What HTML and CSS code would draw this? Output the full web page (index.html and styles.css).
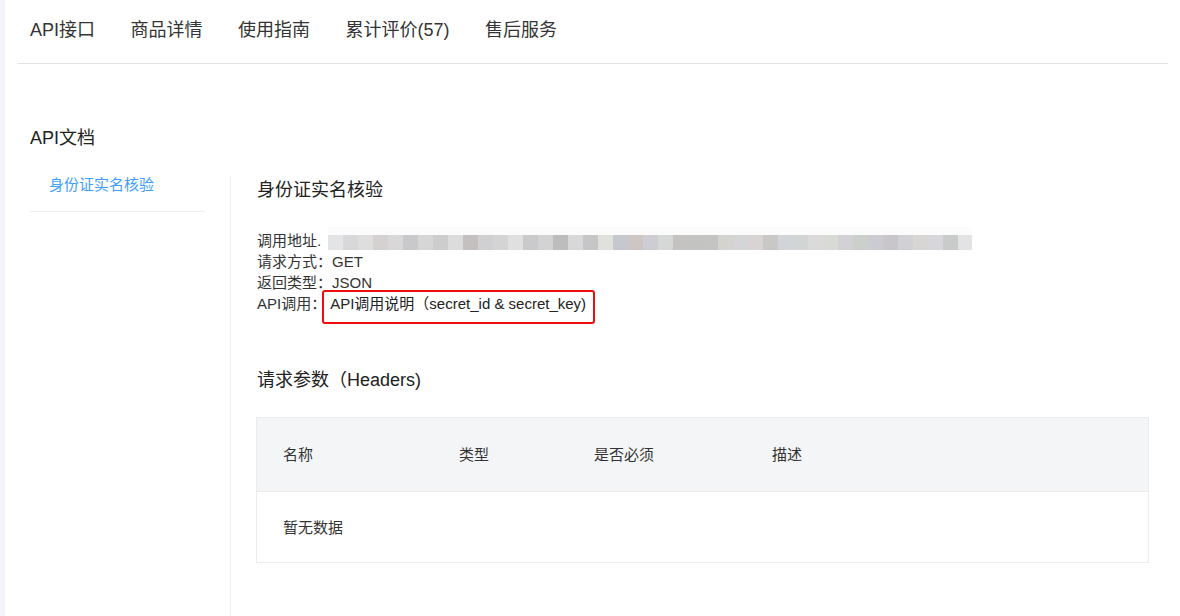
FILE: index.html
```html
<!DOCTYPE html>
<html lang="zh-CN">
<head>
<meta charset="utf-8">
<title>API接口</title>
<link rel="stylesheet" href="styles.css">
</head>
<body>
<div class="page">
  <nav class="tabs">
    <a class="tab">API接口</a>
    <a class="tab">商品详情</a>
    <a class="tab">使用指南</a>
    <a class="tab">累计评价(57)</a>
    <a class="tab">售后服务</a>
  </nav>

  <h2 class="section-title">API文档</h2>

  <div class="doc">
    <aside class="sidebar">
      <div class="menu-item">身份证实名核验</div>
    </aside>
    <main class="content">
      <h3 class="api-title">身份证实名核验</h3>
      <div class="info">
        <div class="info-row"><span class="label">调用地址.</span><span class="blur"></span></div>
        <div class="info-row">请求方式：GET</div>
        <div class="info-row">返回类型：JSON</div>
        <div class="info-row row-link"><span class="label">API调用：</span><span class="link-box">API调用说明（secret_id &amp; secret_key)</span></div>
      </div>

      <h3 class="params-title">请求参数（Headers)</h3>
      <div class="table">
        <div class="thead">
          <div class="cell c1">名称</div>
          <div class="cell c2">类型</div>
          <div class="cell c3">是否必须</div>
          <div class="cell c4">描述</div>
        </div>
        <div class="tbody">
          <div class="cell">暂无数据</div>
        </div>
      </div>
    </main>
  </div>
</div>
</body>
</html>
```

FILE: styles.css
```css
* { box-sizing: border-box; }
html, body { margin: 0; padding: 0; }
body {
  background: #f3f4f8;
  font-family: "Liberation Sans", "Noto Sans CJK SC", sans-serif;
  color: #333;
  overflow: hidden;
}
.page {
  margin-left: 5px;
  background: #fff;
  height: 616px;
  padding: 0 12px 0 13px;
}
.tabs {
  display: flex;
  gap: 35.5px;
  padding: 0 0 3px 12px;
  border-bottom: 1px solid #e2e2e2;
}
.tab {
  font-size: 18px;
  line-height: 60px;
  color: #333;
  white-space: nowrap;
}
.section-title {
  margin: 62px 0 0 12px;
  font-size: 18px;
  line-height: 24px;
  font-weight: normal;
  color: #222;
}
.doc {
  display: flex;
  margin-top: 26px;
  padding-left: 12px;
  padding-right: 19px;
}
.sidebar {
  width: 175px;
  margin-right: 25px;
  flex: none;
}
.menu-item {
  font-size: 15px;
  line-height: 18px;
  color: #409eff;
  padding: 0 0 17px 19px;
  border-bottom: 1px solid #eeeeee;
}
.content {
  flex: 1;
  border-left: 1px solid #eeeeee;
  padding-left: 25px;
  padding-top: 2px;
  height: 440px;
}
.api-title, .params-title {
  margin: 0;
  font-size: 18px;
  line-height: 24px;
  font-weight: normal;
  color: #222;
  padding-left: 1px;
}
.info {
  margin-top: 28px;
  font-size: 15px;
  line-height: 21px;
  color: #333;
  padding-left: 1px;
}
.info-row {
  display: flex;
  align-items: flex-start;
  white-space: nowrap;
}
.blur {
  width: 644px;
  height: 23px;
  margin-top: -3px;
  margin-left: 7px;
  background:
    linear-gradient(to bottom, #fbfbfb 0 8px, transparent 8px),
    linear-gradient(to right,
      #e3e4e6 0 15px, #d8d8da 15px 30px, #dedede 30px 45px, #d6d1d1 45px 60px,
      #d8d8d8 60px 75px, #c9c9cb 75px 90px, #d6d6d6 90px 105px, #cdcdcd 105px 120px,
      #dcdcdc 120px 135px, #c4c0c0 135px 150px, #d0d0d2 150px 165px, #d4d4d4 165px 180px,
      #e0e0e0 180px 195px, #cacacc 195px 210px, #d3d3d3 210px 225px, #bdbdbd 225px 240px,
      #d8d8d8 240px 255px, #c6c6c8 255px 270px, #e0e1dc 270px 285px, #c5c8ce 285px 300px,
      #cfc6c4 300px 315px, #cdcdd3 315px 330px, #d5d8d6 330px 345px, #c4c3c1 345px 360px,
      #c3c3c1 360px 375px, #c4c4c2 375px 390px, #d5d3d0 390px 405px, #d5d5d7 405px 420px,
      #d9d4d3 420px 435px, #c9c8c6 435px 450px, #d3d4d9 450px 465px, #d1d5d4 465px 480px,
      #dbd9da 480px 495px, #d7dad5 495px 510px, #d3d1d6 510px 525px, #ccd0cb 525px 540px,
      #cbcbd1 540px 555px, #c9c6cb 555px 570px, #d1d0d5 570px 585px, #d7d6d4 585px 600px,
      #d7d7db 600px 615px, #c9cbcb 615px 630px, #e3e2e4 630px 644px) 0 8px / 644px 15px no-repeat;
}
.row-link .link-box {
  margin-top: -3px;
  margin-left: -4px;
  border: 2px solid #f00d0d;
  border-radius: 3px;
  padding: 1px 7px 8px 6px;
  color: #222;
}
.params-title {
  margin-top: 44px;
}
.table {
  margin-top: 25px;
  border: 1px solid #ececec;
  font-size: 15px;
  color: #333;
}
.thead {
  display: flex;
  height: 74px;
  padding-top: 1px;
  background: #f4f5f7;
  border-bottom: 1px solid #ececec;
  align-items: center;
}
.tbody {
  display: flex;
  height: 70px;
  padding-top: 1px;
  align-items: center;
}
.cell {
  padding-left: 26px;
  line-height: 20px;
}
.c1 { width: 176px; }
.c2 { width: 135px; }
.c3 { width: 178px; }
.c4 { flex: 1; }
```
